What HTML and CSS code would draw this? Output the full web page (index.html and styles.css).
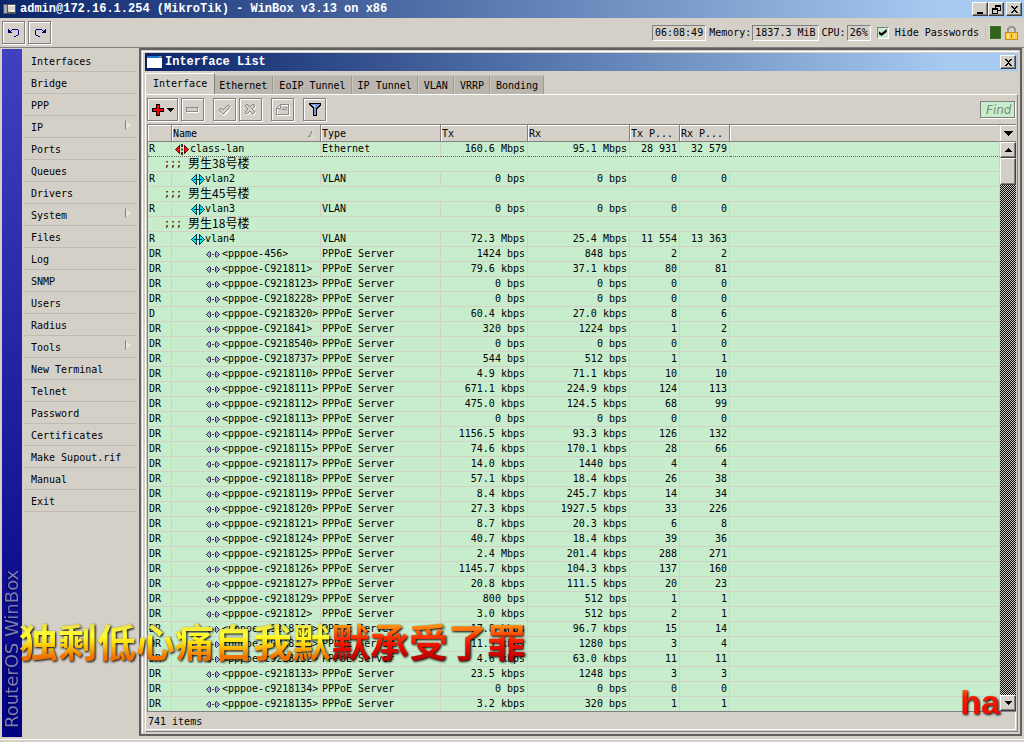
FILE: index.html
```html
<!DOCTYPE html>
<html lang="en">
<head>
<meta charset="utf-8">
<title>admin@172.16.1.254 (MikroTik) - WinBox v3.13 on x86</title>
<link rel="stylesheet" href="styles.css">
</head>
<body>
<svg class="defs" aria-hidden="true">
  <symbol id="i-eth" viewBox="0 0 14 11">
    <path d="M0 5h1V4h1V3h1V2h1V1h1v9H4V9H3V8H2V7H1V6H0zM14 5h-1V4h-1V3h-1V2h-1V1H9v9h1V9h1V8h1V7h1V6h1z" fill="#700"/>
    <path d="M1 5h1V4h1V3h1v2h1v1H4v2H3V7H2V6H1zM13 5h-1V4h-1V3h-1v2H9v1h1v2h1V7h1V6h1z" fill="#f01010"/>
    <path d="M6 0h2v3H6zM6 5h2v1H6zM6 8h2v3H6z" fill="#333"/>
    <path d="M6 4h2v1H6zM6 6h2v1H6z" fill="#999"/>
  </symbol>
  <symbol id="i-vlan" viewBox="0 0 14 11">
    <path d="M0 5h1V4h1V3h1V2h1V1h1V0h1v11H5v-1H4V9H3V8H2V7H1V6H0zM14 5h-1V4h-1V3h-1V2h-1V1H9V0H8v11h1v-1h1V9h1V8h1V7h1V6h1z" fill="#003c50"/>
    <path d="M1 5h1V4h1V3h1V2h1v7H4V8H3V7H2V6H1zM13 5h-1V4h-1V3h-1V2H9v7h1V8h1V7h1V6h1z" fill="#00e8f8"/>
    <path d="M3 5h8v1H3z" fill="#003c50"/>
  </symbol>
  <symbol id="i-ppp" viewBox="0 0 14 7">
    <path d="M0 3h1V2h1V1h1V0h1v1h1v5H4v1H3V6H2V5H1V4H0zM14 3h-1V2h-1V1h-1V0h-1v1H9v5h1v1h1V6h1V5h1V4h1zM6 3h2v1H6z" fill="#334"/>
    <path d="M1 3h1V2h1V1h1v5H3V5H2V4H1zM13 3h-1V2h-1V1h-1v5h1V5h1V4h1z" fill="#b0a4e8"/>
  </symbol>
</svg>

<header class="titlebar app-title">
  <svg class="app-icon" viewBox="0 0 13 10"><path d="M0 0h13v10H0z" fill="#555"/><path d="M1 1h3v8H1z" fill="#aaa"/><path d="M5 1h7v7H5z" fill="#d8d8cc"/><path d="M5 1h7v1H5z" fill="#fff"/><path d="M7 6h5v2H7z" fill="#ececE4"/></svg>
  <h1>admin@172.16.1.254 (MikroTik) - WinBox v3.13 on x86</h1>
  <div class="window-buttons">
    <button class="winbtn" aria-label="Minimize"><svg viewBox="0 0 9 9"><path d="M1 7h6v2H1z"/></svg></button>
    <button class="winbtn" aria-label="Restore"><svg viewBox="0 0 9 9"><path fill-rule="evenodd" d="M3 0h6v6H6v3H0V3h3zM4 2v1h2v2h2V2zM1 5v3h4V5z"/></svg></button>
    <button class="winbtn apart" aria-label="Close"><svg viewBox="0 0 9 9"><path d="M1 1h2v1h1v1h1V2h1V1h2v1H7v1H6v1H5v1h1v1h1v1h1v1H6V7H5V6H4v1H3v1H1V7h1V6h1V5h1V4H3V3H2V2H1z"/></svg></button>
  </div>
</header>

<div class="topbar">
  <button class="tool" aria-label="Undo"><svg width="12" height="9" viewBox="0 0 12 9"><path d="M0 1h1v1h1v1h1v1h1v1H0z" fill="#000080"/><path d="M3 3l2-2h3l2 1 1 2-1 3-2 1H6" fill="none" stroke="#000080"/></svg></button>
  <button class="tool" aria-label="Redo"><svg width="12" height="9" viewBox="0 0 12 9"><path d="M12 1h-1v1h-1v1H9v1H8v1h4z" fill="#000080"/><path d="M9 3L7 1H4L2 2 1 4l1 3 2 1h2" fill="none" stroke="#000080"/></svg></button>
  <div class="stats">
    <output class="field">06:08:49</output>
    <span class="caption">Memory:</span><output class="field">1837.3 MiB</output>
    <span class="caption">CPU:</span><output class="field">26%</output>
    <label class="hide-pass"><input type="checkbox" checked>Hide Passwords</label>
    <span class="load"></span>
    <svg class="lock" viewBox="0 0 13 14"><path d="M3 7V3l2-2h3l2 2v4" fill="none" stroke="#999" stroke-width="2"/><path d="M0 6h13v8H0z" fill="#c09030"/><path d="M1 7h11v6H1z" fill="#fc3"/><path d="M2 8h2v4H2zM9 8h1v4H9z" fill="#ffe890"/><path d="M6 8h1v4H6z" fill="#d08020"/></svg>
  </div>
</div>

<main>
  <div class="brand"><span>RouterOS WinBox</span></div>
  <nav class="menu">
    <a href="#">Interfaces</a><a href="#">Bridge</a><a href="#">PPP</a><a href="#" class="sub">IP</a><a href="#">Ports</a><a href="#">Queues</a><a href="#">Drivers</a><a href="#" class="sub">System</a><a href="#">Files</a><a href="#">Log</a><a href="#">SNMP</a><a href="#">Users</a><a href="#">Radius</a><a href="#" class="sub">Tools</a><a href="#">New Terminal</a><a href="#">Telnet</a><a href="#">Password</a><a href="#">Certificates</a><a href="#">Make Supout.rif</a><a href="#">Manual</a><a href="#">Exit</a>
  </nav>
  <div class="workspace">
    <section class="window">
      <div class="titlebar">
        <svg class="win-icon" viewBox="0 0 15 12"><path d="M0 0h15v12H0z" fill="#fff"/><path d="M0 0h15v2H0z" fill="#1e78d8"/><path d="M12 0h2v1h-2z" fill="#e85"/></svg>
        <h2>Interface List</h2>
        <button class="winbtn" aria-label="Close window"><svg viewBox="0 0 9 9"><path d="M1 1h2v1h1v1h1V2h1V1h2v1H7v1H6v1H5v1h1v1h1v1h1v1H6V7H5V6H4v1H3v1H1V7h1V6h1V5h1V4H3V3H2V2H1z"/></svg></button>
      </div>
      <div class="tabs" role="tablist">
        <button role="tab" class="active">Interface</button><button role="tab">Ethernet</button><button role="tab">EoIP Tunnel</button><button role="tab">IP Tunnel</button><button role="tab">VLAN</button><button role="tab">VRRP</button><button role="tab">Bonding</button>
      </div>
      <div class="panel">
        <div class="tools">
          <button class="tool wide" aria-label="Add"><svg width="22" height="12" viewBox="0 0 22 12"><path d="M4 0h4v4h4v4H8v4H4V8H0V4h4z"/><path d="M5 1h2v4h4v2H7v4H5V7H1V5h4z" fill="#f00"/><path d="M15 4h7v1h-1v1h-1v1h-1v1h-1V7h-1V6h-1V5h-1z"/></svg></button>
          <button class="tool gap" aria-label="Remove"><svg width="13" height="6" viewBox="0 0 13 6"><path d="M1 1h12v5H1z" fill="#fff"/><path d="M.5.5h11v4H.5z" fill="#d4d0c8" stroke="#8a8a86"/></svg></button>
          <button class="tool" aria-label="Enable"><svg width="13" height="12" viewBox="0 0 13 12"><path d="M1 7l2-2 2 2 5-6 2 2-7 8z" fill="none" stroke="#fff" transform="translate(1 1)"/><path d="M1 6l2-2 2 2 5-5 2 2-7 7z" fill="#d4d0c8" stroke="#8a8a86"/></svg></button>
          <button class="tool gap" aria-label="Disable"><svg width="13" height="13" viewBox="0 0 13 13"><path d="M3 1l3 3 3-3 2 2-3 3 3 3-2 2-3-3-3 3-2-2 3-3-3-3z" fill="none" stroke="#fff" transform="translate(1 1)"/><path d="M3 1l3 3 3-3 2 2-3 3 3 3-2 2-3-3-3 3-2-2 3-3-3-3z" fill="#d4d0c8" stroke="#8a8a86"/></svg></button>
          <button class="tool gap" aria-label="Comment"><svg width="14" height="12" viewBox="0 0 14 12"><path d="M4.500 1.500h9v10h-12v-6z" fill="none" stroke="#fff"/><path d="M.5 4.500l4-4h8v10H.5zM.5 4.500h4v-4M7 3.500h1M9 3.500h2M6 5.500h5" fill="none" stroke="#8a8a86"/></svg></button>
          <button class="tool" aria-label="Filter"><svg width="12" height="13" viewBox="0 0 12 13"><path d="M0 0h12v2L8 6v7H4V6L0 2z"/><path d="M1 1h10L7 5v7H5V5z" fill="#7c94d8"/><path d="M3 2h3v2H5z" fill="#c4d0f4"/></svg></button>
          <input class="find" type="text" placeholder="Find" aria-label="Find">
        </div>
        <div class="list">
          <table>
            <colgroup><col class="c-flag"><col class="c-name"><col class="c-type"><col class="c-tx"><col class="c-rx"><col class="c-pk"><col class="c-pk"><col></colgroup>
            <thead><tr><th></th><th><span class="sorted">Name<svg width="8" height="7" viewBox="0 0 8 7"><path d="M4 .5l3.500 6H.5" fill="none" stroke="#c7edcc"/><path d="M.5 6.500L4 .5" stroke="#808080"/></svg></span></th><th>Type</th><th>Tx</th><th>Rx</th><th>Tx P...</th><th>Rx P...</th><th></th></tr></thead>
            <tbody id="rows"></tbody>
          </table>
          <div class="scroll">
            <button class="cols" aria-label="Columns"><svg width="9" height="5" viewBox="0 0 9 5"><path d="M0 0h9v1H8v1H7v1H6v1H5v1H4V4H3V3H2V2H1V1H0z"/></svg></button>
            <button class="winbtn arrow" aria-label="Scroll up"><svg viewBox="0 0 7 4"><path d="M3 0h1v1h1v1h1v1h1v1H0V3h1V2h1V1h1z"/></svg></button>
            <div class="track"><div class="thumb"></div></div>
            <button class="winbtn arrow" aria-label="Scroll down"><svg viewBox="0 0 7 4"><path d="M0 0h7v1H6v1H5v1H4v1H3V3H2V2H1V1H0z"/></svg></button>
          </div>
        </div>
        <footer class="items">741 items</footer>
      </div>
    </section>
  </div>
</main>

<p class="lyric"><span class="next">独剩低心痛自我默</span><span class="sung">默承受了罪</span></p>
<p class="lyric tail"><span class="sung">ha</span></p>
<script src="rows.js"></script>
</body>
</html>
```

FILE: rows.js
```js
const data = `R|eth|class-lan|160.6 Mbps|95.1 Mbps|28 931|32 579
#|男生38号楼
R|vlan|vlan2|0 bps|0 bps|0|0
#|男生45号楼
R|vlan|vlan3|0 bps|0 bps|0|0
#|男生18号楼
R|vlan|vlan4|72.3 Mbps|25.4 Mbps|11 554|13 363
DR|ppp|<pppoe-456>|1424 bps|848 bps|2|2
DR|ppp|<pppoe-C921811>|79.6 kbps|37.1 kbps|80|81
DR|ppp|<pppoe-C9218123>|0 bps|0 bps|0|0
DR|ppp|<pppoe-C9218228>|0 bps|0 bps|0|0
D|ppp|<pppoe-C9218320>|60.4 kbps|27.0 kbps|8|6
DR|ppp|<pppoe-C921841>|320 bps|1224 bps|1|2
DR|ppp|<pppoe-C9218540>|0 bps|0 bps|0|0
DR|ppp|<pppoe-C9218737>|544 bps|512 bps|1|1
DR|ppp|<pppoe-c9218110>|4.9 kbps|71.1 kbps|10|10
DR|ppp|<pppoe-c9218111>|671.1 kbps|224.9 kbps|124|113
DR|ppp|<pppoe-c9218112>|475.0 kbps|124.5 kbps|68|99
DR|ppp|<pppoe-c9218113>|0 bps|0 bps|0|0
DR|ppp|<pppoe-c9218114>|1156.5 kbps|93.3 kbps|126|132
DR|ppp|<pppoe-c9218115>|74.6 kbps|170.1 kbps|28|66
DR|ppp|<pppoe-c9218117>|14.0 kbps|1440 bps|4|4
DR|ppp|<pppoe-c9218118>|57.1 kbps|18.4 kbps|26|38
DR|ppp|<pppoe-c9218119>|8.4 kbps|245.7 kbps|14|34
DR|ppp|<pppoe-c9218120>|27.3 kbps|1927.5 kbps|33|226
DR|ppp|<pppoe-c9218121>|8.7 kbps|20.3 kbps|6|8
DR|ppp|<pppoe-c9218124>|40.7 kbps|18.4 kbps|39|36
DR|ppp|<pppoe-c9218125>|2.4 Mbps|201.4 kbps|288|271
DR|ppp|<pppoe-c9218126>|1145.7 kbps|104.3 kbps|137|160
DR|ppp|<pppoe-c9218127>|20.8 kbps|111.5 kbps|20|23
DR|ppp|<pppoe-c9218129>|800 bps|512 bps|1|1
DR|ppp|<pppoe-c921812>|3.0 kbps|512 bps|2|1
DR|ppp|<pppoe-c9218130>|17.8 kbps|96.7 kbps|15|14
DR|ppp|<pppoe-c9218131>|11.5 kbps|1280 bps|3|4
DR|ppp|<pppoe-c9218132>|4.6 kbps|63.0 kbps|11|11
DR|ppp|<pppoe-c9218133>|23.5 kbps|1248 bps|3|3
DR|ppp|<pppoe-c9218134>|0 bps|0 bps|0|0
DR|ppp|<pppoe-c9218135>|3.2 kbps|320 bps|1|1`;

const types = { eth: 'Ethernet', vlan: 'VLAN', ppp: 'PPPoE Server' };
const esc = (s) => s.replace(/</g, '&lt;').replace(/>/g, '&gt;');

document.getElementById('rows').innerHTML = data.split('\n').map((line) => {
  const [flag, kind, name, ...nums] = line.split('|');
  if (flag === '#') {
    return `<tr class="comment"><td colspan="8">;;; <span lang="zh">${kind}</span></td></tr>`;
  }
  return `<tr class="${kind}"><td>${flag}</td>` +
    `<td><span class="name"><svg><use href="#i-${kind}"/></svg>${esc(name)}</span></td>` +
    `<td>${types[kind]}</td>` +
    nums.map((n) => `<td class="num">${n}</td>`).join('') + '<td></td></tr>';
}).join('');
```

FILE: styles.css
```css
* { box-sizing: border-box; }

:root {
  --face: #d4d0c8;
  --green: #c7edcc;
  --gray: #808080;
  --dark: #404040;
}

body {
  margin: 0;
  height: 100vh;
  display: flex;
  flex-direction: column;
  overflow: hidden;
  background: var(--face);
  color: #000;
  font: 10px/14px "DejaVu Sans Mono", "Liberation Mono", "Noto Sans CJK SC", monospace;
}

button, input { font: inherit; color: inherit; margin: 0; padding: 0; border-radius: 0; }
svg { display: block; shape-rendering: crispEdges; flex: none; }
.defs { position: absolute; width: 0; height: 0; }

/* title bars */
.titlebar {
  display: flex;
  align-items: center;
  height: 18px;
  flex: none;
  color: #fff;
  background: linear-gradient(90deg, #0a246a, #a6caf0 92%);
}
.app-title { padding: 0 2px 0 3px; }
h1, h2 { flex: 1; margin: 0; padding-top: 1px; font: bold 12px/17px "Liberation Mono", monospace; white-space: nowrap; }
.app-icon { width: 13px; height: 10px; margin-right: 4px; }
.win-icon { width: 15px; height: 12px; margin: 0 3px 0 2px; }
.window-buttons { display: flex; }
.winbtn {
  display: grid;
  place-items: center;
  width: 16px;
  height: 14px;
  background: var(--face);
  border: 1px solid;
  border-color: #fff var(--dark) var(--dark) #fff;
  box-shadow: inset -1px -1px var(--gray);
}
.winbtn svg { width: 9px; height: 9px; }
.apart { margin-left: 2px; }
.window .winbtn { margin-right: 2px; }

/* top toolbar */
.topbar {
  display: flex;
  align-items: center;
  height: 30px;
  flex: none;
  padding: 0 6px 0 2px;
  gap: 3px;
  border-bottom: 1px solid var(--gray);
}
.tool {
  display: grid;
  place-items: center;
  width: 23px;
  height: 23px;
  background: var(--face);
  border: 1px solid var(--gray);
  box-shadow: inset 1px 1px #fff, 1px 1px #fff;
}
.stats { display: flex; align-items: center; gap: 1px; margin-left: auto; white-space: nowrap; }
.caption { margin-left: 2px; }
.field { height: 16px; padding: 0 2px; border: 1px solid; border-color: var(--gray) #fff #fff var(--gray); }
.hide-pass { display: flex; align-items: center; gap: 6px; margin-left: 5px; padding-right: 6px; border-right: 1px solid #c0bcb4; }
.hide-pass input {
  appearance: none;
  display: grid;
  place-items: center;
  width: 12px;
  height: 12px;
  background: var(--green);
  border: 1px solid;
  border-color: var(--gray) #fff #fff var(--gray);
}
.hide-pass input:checked::before {
  content: "";
  width: 8px;
  height: 7px;
  background: #000;
  clip-path: polygon(0 30%, 35% 62%, 100% 0, 100% 42%, 35% 100%, 0 70%);
}
.load { width: 11px; height: 13px; margin-left: 3px; background: #306418; border: 1px dotted #4a7a34; }
.lock { width: 13px; height: 14px; margin-left: 3px; }

/* main area */
main {
  flex: 1;
  min-height: 0;
  display: flex;
  margin-bottom: 2px;
  padding-bottom: 2px;
  border-bottom: 1px solid #fff;
}
.brand {
  display: flex;
  width: 20px;
  flex: none;
  margin: 1px 2px 0;
  background: linear-gradient(#4040c0, #000080);
}
.brand span {
  writing-mode: vertical-rl;
  transform: rotate(180deg);
  padding-top: 9px;
  font: 18px/20px "DejaVu Sans", sans-serif;
  color: #7c7cb8;
  text-shadow: -1px -1px 1px #000040;
}
.menu { display: flex; flex-direction: column; width: 113px; flex: none; padding-top: 2px; }
.menu a {
  display: flex;
  align-items: center;
  justify-content: space-between;
  height: 22px;
  flex: none;
  padding: 2px 6px 0 7px;
  border-bottom: 1px solid #bfbbb3;
  color: inherit;
  text-decoration: none;
}
.sub::after {
  content: "";
  width: 6px;
  height: 10px;
  margin-bottom: 5px;
  background: linear-gradient(90deg, #808080 1px, #e0e8dc 1px);
  clip-path: polygon(0 0, 100% 50%, 0 100%);
}
.workspace {
  flex: 1;
  min-width: 0;
  display: flex;
  margin: 0 2px 1px;
  padding: 1px;
  border: 2px solid #606060;
}
.window {
  flex: 1;
  min-width: 0;
  display: flex;
  flex-direction: column;
  padding: 1px 0 0 2px;
  border: 1px solid;
  border-color: #fff var(--face) var(--face) #fff;
}

/* tabs */
.tabs { display: flex; align-items: flex-end; height: 23px; flex: none; }
.tabs button {
  height: 19px;
  padding: 1px 5px 0;
  background: #bab6ae;
  border: 1px solid;
  border-color: #cac6be #a09c94 transparent #cac6be;
  border-bottom: 0;
  white-space: nowrap;
}
.tabs .active {
  position: relative;
  height: 21px;
  margin-right: -2px;
  padding: 0 7px 1px;
  background: var(--face);
  border-color: #fff var(--gray) transparent #fff;
}

/* panel */
.panel {
  flex: 1;
  min-height: 0;
  display: flex;
  flex-direction: column;
  padding: 3px 1px 1px;
  border: 1px solid;
  border-color: #fff var(--gray) var(--gray) #fff;
}
.tools { display: flex; align-items: center; gap: 3px; flex: none; height: 26px; padding-bottom: 3px; }
.wide { width: 31px; }
.gap { margin-right: 6px; }
.find {
  width: 35px;
  height: 17px;
  margin-left: auto;
  margin-right: 1px;
  padding: 0 2px 0 5px;
  background: var(--green);
  border: 1px solid var(--gray);
  box-shadow: 1px 1px #fff;
  font: italic 12px/15px "DejaVu Sans", sans-serif;
}
.find::placeholder { color: #7c8c7c; opacity: 1; }
.list {
  flex: 1;
  min-height: 0;
  display: flex;
  overflow: hidden;
  border: solid var(--gray);
  border-width: 1px 0 1px 1px;
  background: var(--green);
}
table { flex: 1; min-width: 0; height: 0; table-layout: fixed; border-collapse: separate; border-spacing: 0; }
.c-flag { width: 24px; }
.c-name { width: 149px; }
.c-type { width: 120px; }
.c-tx { width: 87px; }
.c-rx { width: 102px; }
.c-pk { width: 50px; }
th {
  height: 17px;
  padding: 2px 1px 0;
  text-align: left;
  font-weight: normal;
  white-space: nowrap;
  background: var(--face);
  border-right: 1px solid var(--gray);
  border-bottom: 1px solid var(--gray);
  box-shadow: inset 1px 1px #fff;
}
.sorted { display: flex; align-items: center; justify-content: space-between; padding-right: 3px; }
td {
  height: 15px;
  padding: 0 1px;
  white-space: nowrap;
  border-right: 1px solid #d4d0c8;
  border-bottom: 1px solid #d4d0c8;
}
td:last-child, th:last-child { border-right-color: var(--face); }
.eth td { border-bottom: 1px dotted #606060; }
.num { padding-right: 2px; text-align: right; }
.name { display: flex; align-items: center; padding-left: 2px; gap: 1px; }
.name svg { width: 14px; height: 11px; }
.vlan .name { padding-left: 18px; gap: 0; }
.ppp .name { padding-left: 33px; gap: 2px; }
.ppp .name svg { height: 7px; }
.comment td { padding-left: 16px; line-height: 14px; }
.comment span { font: 12px/12px "Noto Sans CJK SC", sans-serif; display: inline-block; height: 14px; vertical-align: top; }

/* scrollbar */
.scroll { display: flex; flex-direction: column; width: 16px; flex: none; }
.cols {
  display: grid;
  place-items: center;
  height: 17px;
  flex: none;
  background: var(--face);
  border: 0;
  border-bottom: 1px solid var(--gray);
  box-shadow: inset 1px 1px #fff;
}
.window .arrow { width: 16px; height: 16px; flex: none; margin: 0; }
.arrow svg { width: 7px; height: 4px; }
.track { flex: 1; background: repeating-conic-gradient(#000 0 25%, #d4d0c8 0 50%) 0 0 / 2px 2px; }
.thumb {
  height: 27px;
  background: var(--face);
  border: 1px solid;
  border-color: #fff var(--dark) var(--dark) #fff;
  box-shadow: inset -1px -1px var(--gray);
}
.items { flex: none; height: 18px; padding: 3px 1px 1px; border-right: 1px solid #fff; border-bottom: 1px solid #fff; }

/* karaoke captions floating over the desktop */
.lyric {
  position: absolute;
  left: 19px;
  bottom: 78px;
  margin: 0;
  font: bold 39px/48px "Noto Sans CJK SC", sans-serif;
  white-space: nowrap;
  pointer-events: none;
  filter: drop-shadow(1px 1px 1px #000);
}
.lyric span { display: inline-block; color: transparent; -webkit-background-clip: text; background-clip: text; }
.next { background-image: linear-gradient(#e8d850 15%, #ffff30 40%, #ffe010 55%, #f07000 85%); }
.sung { background-image: linear-gradient(#ff9010 20%, #f83000 45%, #f01000 60%, #b80000 90%); }
.tail { left: auto; right: 24px; bottom: 18px; font: bold 34px/44px "Liberation Sans", sans-serif; }
.tail .sung { background-image: linear-gradient(#ff8010 15%, #f81800 40%, #f00000); }
```
